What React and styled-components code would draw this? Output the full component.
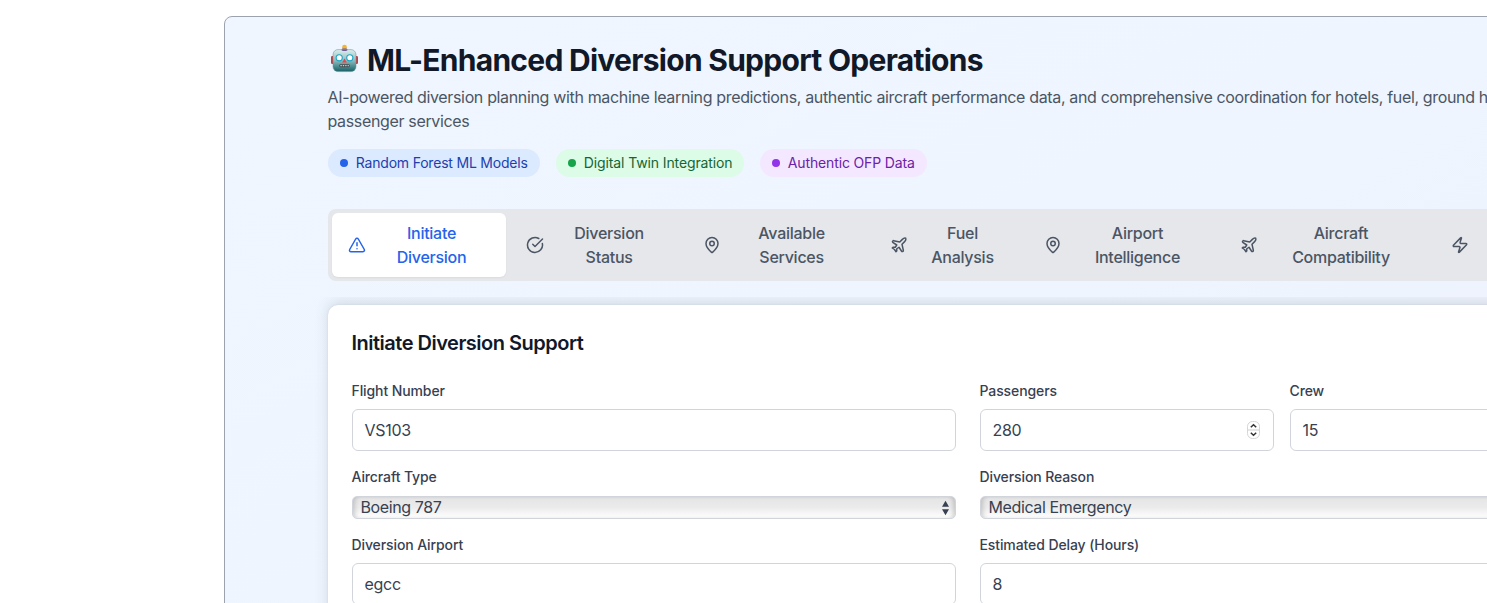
import React from "react";
import styled, { createGlobalStyle } from "styled-components";
import { TriangleAlert, CircleCheckBig, MapPin, Plane, Zap } from "lucide-react";

const GlobalStyle = createGlobalStyle`
  *, *::before, *::after { box-sizing: border-box; }
  html, body { margin: 0; height: 100%; overflow: hidden; background: #fff; }
  body { font-family: Inter, "Liberation Sans", sans-serif; font-size: 16px; line-height: 24px; color: #374151; }
  h1, h2, p { margin: 0; }
`;

const Page = styled.div`
  height: 603px;
  padding: 16px 0 0 224px;
  overflow: hidden;
`;

const Frame = styled.main`
  width: 1500px;
  height: 800px;
  padding: 25px 0 0 103px;
  border: 1px solid #9ca3af;
  border-radius: 8px;
  background: linear-gradient(to bottom right, #eff6ff 0%, #eef5fe 45%, #eef2ff 80%);
`;

const Header = styled.header`
  display: flex;
  flex-direction: column;
`;

const TitleRow = styled.h1`
  display: flex;
  align-items: center;
  height: 36px;
  margin-bottom: 7px;
  color: #111827;
  font-size: 30px;
  font-weight: 700;
  line-height: 36px;
  letter-spacing: -0.72px;
  white-space: nowrap;
`;

const TitleText = styled.span`
  padding-bottom: 1px;
`;

const RobotSvg = styled.svg`
  flex: none;
  width: 32px;
  height: 32px;
  margin-right: 7px;
`;

const Subtitle = styled.p`
  margin-left: -0.5px;
  color: #4b5563;
  letter-spacing: -0.345px;
  white-space: nowrap;
`;

const Badges = styled.div`
  display: flex;
  gap: 16px;
  margin-top: 16px;
`;

const Badge = styled.span`
  display: flex;
  align-items: center;
  gap: 7.8px;
  width: ${(p) => p.$width}px;
  height: 28px;
  padding: 0 12px;
  border-radius: 14px;
  background: ${(p) => p.$bg};
  color: ${(p) => p.$color};
  font-size: 14px;
  line-height: 20px;
  letter-spacing: ${(p) => p.$tracking}px;
  white-space: nowrap;

  &::before {
    content: "";
    flex: none;
    width: 8px;
    height: 8px;
    border-radius: 50%;
    background: ${(p) => p.$dot};
  }
`;

const TabBar = styled.nav`
  display: flex;
  gap: 4px;
  height: 72px;
  margin-top: 32px;
  padding: 4px;
  border-radius: 8px;
  background: #e5e7eb;
`;

const Tab = styled.div`
  display: flex;
  flex: none;
  align-items: center;
  gap: 8px;
  width: ${(p) => p.$width}px;
  padding: 8px 15.5px 8px 16.5px;
  border-radius: 6px;
  background: ${(p) => (p.$active ? "#fff" : "transparent")};
  box-shadow: ${(p) => (p.$active ? "0 1px 2px rgba(0, 0, 0, 0.05)" : "none")};
  color: ${(p) => (p.$active ? "#2563eb" : "#4b5563")};
  font-weight: 500;
  letter-spacing: -0.27px;

  svg {
    flex: none;
    margin: -1px;
  }
`;

const TabLabel = styled.span`
  display: flex;
  flex: 1;
  flex-direction: column;
  align-items: center;
`;

const ShadowClip = styled.div`
  margin: 16px 0 0 -40px;
  padding: 8px 0 0 40px;
  overflow: hidden;
`;

const Card = styled.section`
  height: 500px;
  padding: 24px;
  border-radius: 10px;
  background: #fff;
  box-shadow: 0 -3px 14px rgba(60, 75, 80, 0.16), 0 0 2px rgba(0, 0, 0, 0.1);
`;

const CardTitle = styled.h2`
  margin: 0 0 24px -0.5px;
  color: #111827;
  font-size: 20px;
  font-weight: 600;
  line-height: 28px;
  letter-spacing: -0.5px;
`;

const Form = styled.div`
  display: grid;
  grid-template-columns: 604px 604px;
  column-gap: 24px;
  row-gap: 16px;
`;

const Pair = styled.div`
  display: grid;
  grid-template-columns: 294px 294px;
  gap: 16px;
`;

const Field = styled.div`
  display: flex;
  flex-direction: column;
`;

const Label = styled.span`
  margin: 0 0 8px -0.5px;
  font-size: 14px;
  font-weight: 500;
  line-height: 20px;
  letter-spacing: -0.1px;
`;

const TextBox = styled.div`
  display: flex;
  align-items: center;
  justify-content: space-between;
  height: 42px;
  padding: 0 12px 0 11.5px;
  border: 1px solid #d1d5db;
  border-radius: 6px;
  background: #fff;
  letter-spacing: -0.27px;
`;

const SelectBox = styled(TextBox)`
  height: 23px;
  margin-top: 1px;
  padding: 0 5px 0 7.5px;
  border-radius: 5px;
  background: linear-gradient(to bottom, #e4e4e4, #ebebeb 50%, #fff);
  box-shadow: inset 4px 0 4px -2px rgba(0, 0, 0, 0.16), inset -4px 0 4px -2px rgba(0, 0, 0, 0.16);
  letter-spacing: -0.38px;
`;

const SelectValue = styled.span`
  padding-bottom: 1px;
  line-height: 20px;
`;

const Stepper = () => (
  <svg width="15" height="20" viewBox="0 0 15 20" fill="none">
    <rect x="1.5" y="1.5" width="12" height="17" rx="5" fill="#fff" stroke="#d6d6d6" />
    <path d="M2 10H13" stroke="#dedede" strokeWidth="1.5" />
    <path d="M4.8 7.3L7.5 4.8L10.2 7.3M4.8 12.7L7.5 15.2L10.2 12.7" stroke="#333" strokeWidth="1.5" />
  </svg>
);

const Arrows = () => (
  <svg width="9" height="16" viewBox="0 0 9 16" fill="#374151">
    <path d="M4.5 0.8L8 6.7H1Z M4.5 15.2L8 9.3H1Z" />
  </svg>
);

const Robot = () => (
  <RobotSvg viewBox="0 0 32 32">
    <defs>
      <linearGradient id="face" x1="0" y1="0" x2="0" y2="1">
        <stop offset="0" stopColor="#dcefed" />
        <stop offset="0.5" stopColor="#8fb9bc" />
        <stop offset="0.8" stopColor="#42868b" />
        <stop offset="1" stopColor="#1b5f66" />
      </linearGradient>
    </defs>
    <rect x="3" y="12" width="3" height="8" rx="1.2" fill="#c63c40" />
    <rect x="27" y="12" width="3" height="8" rx="1.2" fill="#c63c40" />
    <circle cx="16.5" cy="3.2" r="2.4" fill="#f5b52e" />
    <rect x="13.7" y="4.4" width="5.6" height="2.6" rx="1" fill="#6c5a9b" />
    <rect x="5" y="5.6" width="23" height="22" rx="5" fill="url(#face)" stroke="#5e9197" strokeWidth="0.5" />
    <path d="M13.7 5.6H19.3V6.4Q16.5 7.6 13.7 6.4Z" fill="#6c5a9b" />
    <circle cx="11.2" cy="13.8" r="3.6" fill="#18a7c8" />
    <circle cx="21.8" cy="13.8" r="3.6" fill="#18a7c8" />
    <circle cx="11.2" cy="13.8" r="2.5" fill="#fff" />
    <circle cx="21.8" cy="13.8" r="2.5" fill="#fff" />
    <path d="M16.5 14.5L18.9 18.4H14.1Z" fill="#e5484a" />
    <rect x="11.3" y="20.2" width="10.4" height="3" rx="1" fill="#414e52" />
    <path d="M12.4 21.7H20.8" stroke="#c6d2d0" strokeWidth="1.3" strokeDasharray="1.4 1" />
  </RobotSvg>
);

const tabs = [
  { icon: TriangleAlert, lines: ["Initiate", "Diversion"], width: 174, active: true },
  { icon: CircleCheckBig, lines: ["Diversion", "Status"], width: 173.2 },
  { icon: MapPin, lines: ["Available", "Services"], width: 183.8 },
  { icon: Plane, lines: ["Fuel", "Analysis"], width: 150 },
  { icon: MapPin, lines: ["Airport", "Intelligence"], width: 192 },
  { icon: Plane, lines: ["Aircraft", "Compatibility"], width: 207 },
  { icon: Zap, lines: [], width: 180 },
];

export default function App() {
  return (
    <>
      <GlobalStyle />
      <Page>
        <Frame>
          <Header>
            <TitleRow><Robot /><TitleText>ML-Enhanced Diversion Support Operations</TitleText></TitleRow>
            <Subtitle>
              AI-powered diversion planning with machine learning predictions, authentic aircraft performance data, and comprehensive coordination for hotels, fuel, ground handling, and
              <br />
              passenger services
            </Subtitle>
            <Badges>
              <Badge $width={212} $tracking={-0.2} $bg="#dbeafe" $color="#1e40af" $dot="#2563eb">Random Forest ML Models</Badge>
              <Badge $width={188} $tracking={-0.12} $bg="#dcfce7" $color="#166534" $dot="#16a34a">Digital Twin Integration</Badge>
              <Badge $width={167} $tracking={-0.14} $bg="#f3e8ff" $color="#6b21a8" $dot="#9333ea">Authentic OFP Data</Badge>
            </Badges>
          </Header>
          <TabBar>
            {tabs.map(({ icon: Icon, lines, width, active }, i) => (
              <Tab key={i} $width={width} $active={active}>
                <Icon size={18} />
                <TabLabel>{lines.map((line) => <span key={line}>{line}</span>)}</TabLabel>
              </Tab>
            ))}
          </TabBar>
          <ShadowClip>
            <Card>
              <CardTitle>Initiate Diversion Support</CardTitle>
              <Form>
                <Field><Label>Flight Number</Label><TextBox>VS103</TextBox></Field>
                <Pair>
                  <Field><Label>Passengers</Label><TextBox>280<Stepper /></TextBox></Field>
                  <Field><Label>Crew</Label><TextBox>15</TextBox></Field>
                </Pair>
                <Field><Label>Aircraft Type</Label><SelectBox><SelectValue>Boeing 787</SelectValue><Arrows /></SelectBox></Field>
                <Field><Label>Diversion Reason</Label><SelectBox><SelectValue>Medical Emergency</SelectValue><Arrows /></SelectBox></Field>
                <Field><Label>Diversion Airport</Label><TextBox>egcc</TextBox></Field>
                <Field><Label>Estimated Delay (Hours)</Label><TextBox>8</TextBox></Field>
              </Form>
            </Card>
          </ShadowClip>
        </Frame>
      </Page>
    </>
  );
}
